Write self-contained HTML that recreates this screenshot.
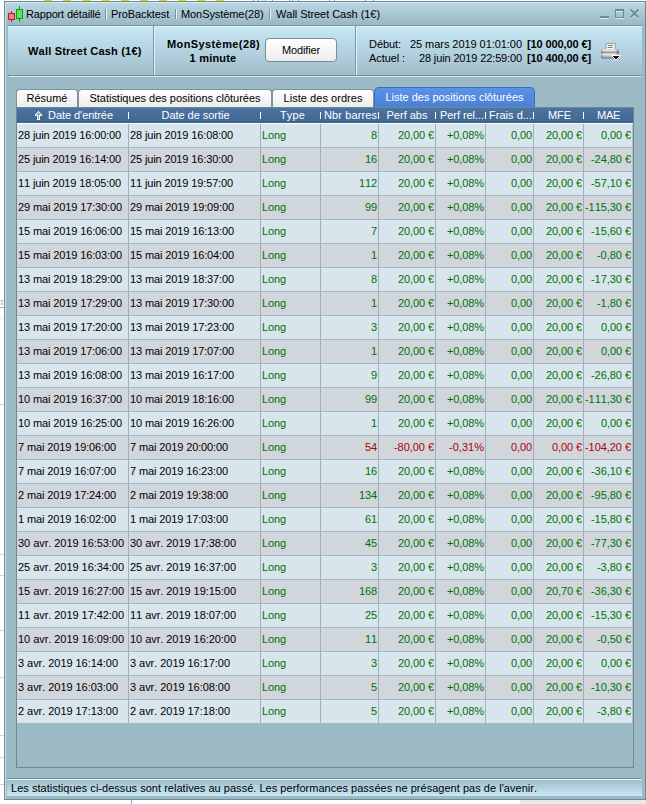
<!DOCTYPE html>
<html><head><meta charset="utf-8"><style>
*{margin:0;padding:0;box-sizing:border-box}
html,body{width:646px;height:804px;overflow:hidden;background:#fff}
body{position:relative;font-family:"Liberation Sans",sans-serif;font-size:11px;color:#000}
.a{position:absolute}
.t{position:absolute;white-space:pre;line-height:13px;font-size:11px;font-kerning:none}
.b{font-weight:bold}
.r{text-align:right}
.c{text-align:center}
.g{color:#007000}
.rd{color:#b00000}
</style></head><body>

<div class="a" style="left:520px;top:800px;width:126px;height:4px;background:#e8e8e8"></div>
<div class="a" style="left:131px;top:800px;width:1px;height:4px;background:#a8a8b0"></div>
<div class="a" style="left:44px;top:0;width:8px;height:1px;background:#f2d200"></div>
<div class="a" style="left:63px;top:0;width:8px;height:1px;background:#f2d200"></div>
<div class="a" style="left:83px;top:0;width:8px;height:1px;background:#f2d200"></div>
<div class="a" style="left:102px;top:0;width:8px;height:1px;background:#f2d200"></div>
<div class="a" style="left:121px;top:0;width:8px;height:1px;background:#f2d200"></div>
<div class="a" style="left:140px;top:0;width:8px;height:1px;background:#f2d200"></div>
<div class="a" style="left:159px;top:0;width:8px;height:1px;background:#f2d200"></div>
<div class="a" style="left:178px;top:0;width:8px;height:1px;background:#f2d200"></div>
<div class="a" style="left:197px;top:0;width:8px;height:1px;background:#f2d200"></div>
<div class="a" style="left:216px;top:0;width:8px;height:1px;background:#f2d200"></div>
<div class="a" style="left:253px;top:0;width:1px;height:1px;background:#8aa6d0"></div>
<div class="a" style="left:258px;top:0;width:1px;height:1px;background:#8aa6d0"></div>
<div class="a" style="left:262px;top:0;width:1px;height:1px;background:#8aa6d0"></div>
<div class="a" style="left:265px;top:0;width:1px;height:1px;background:#8aa6d0"></div>
<div class="a" style="left:272px;top:0;width:1px;height:1px;background:#8aa6d0"></div>
<div class="a" style="left:289px;top:0;width:1px;height:1px;background:#8aa6d0"></div>
<div class="a" style="left:292px;top:0;width:1px;height:1px;background:#8aa6d0"></div>
<div class="a" style="left:298px;top:0;width:1px;height:1px;background:#8aa6d0"></div>
<div class="a" style="left:334px;top:0;width:1px;height:1px;background:#8aa6d0"></div>
<div class="a" style="left:329px;top:0;width:1px;height:1px;background:#8aa6d0"></div>
<div class="a" style="left:365px;top:0;width:1px;height:1px;background:#8aa6d0"></div>
<div class="a" style="left:373px;top:0;width:1px;height:1px;background:#8aa6d0"></div>
<div class="a" style="left:0;top:307px;width:4px;height:1px;background:#b4b4b4"></div>
<div class="a" style="left:0;top:318px;width:4px;height:1px;background:#ececec"></div>
<div class="a" style="left:0;top:404px;width:4px;height:1px;background:#d4d4d4"></div>
<div class="a" style="left:0;top:554px;width:4px;height:1px;background:#d4d4d4"></div>
<div class="a" style="left:0;top:575px;width:4px;height:1px;background:#d4d4d4"></div>
<div class="a" style="left:0;top:630px;width:4px;height:1px;background:#d4d4d4"></div>
<div class="a" style="left:0;top:677px;width:4px;height:1px;background:#d4d4d4"></div>
<div class="a" style="left:0;top:735px;width:4px;height:1px;background:#d4d4d4"></div>
<div class="a" style="left:0;top:757px;width:4px;height:1px;background:#d4d4d4"></div>
<div class="a" style="left:0;top:784px;width:4px;height:1px;background:#d4d4d4"></div>
<div class="a" style="left:1px;top:300px;width:2px;height:2px;background:#c0c0c0"></div>
<div class="a" style="left:1px;top:303px;width:2px;height:2px;background:#c0c0c0"></div>
<div class="a" style="left:4px;top:1px;width:642px;height:799px;background:#9cb9c6;border:1px solid #6f8793"></div>
<div class="a" style="left:5px;top:2px;width:1px;height:797px;background:#c9e3ee"></div>
<div class="a" style="left:6px;top:2px;width:639px;height:23px;background:linear-gradient(#bad7e3,#9ab7c4)"></div>
<div class="a" style="left:5px;top:2px;width:640px;height:1px;background:#d2eef9"></div>
<div class="a" style="left:8px;top:25px;width:634px;height:1px;background:#7f97a2"></div>
<svg class="a" style="left:0;top:0" width="30" height="26" viewBox="0 0 30 26">
<rect x="11" y="11" width="1" height="11" fill="#b02020"/>
<rect x="8.5" y="13.5" width="6" height="6" fill="#f08080" stroke="#b82020" stroke-width="1"/>
<rect x="19" y="6" width="1" height="16" fill="#10a010"/>
<rect x="16.5" y="9.5" width="6" height="9" fill="#60e060" stroke="#10a010" stroke-width="1"/>
</svg>
<div class="t " style="left:26px;top:8px;letter-spacing:-0.16px">Rapport détaillé</div>
<div class="t " style="left:111px;top:8px;letter-spacing:-0.1px">ProBacktest</div>
<div class="t " style="left:181px;top:8px;letter-spacing:-0.08px">MonSystème(28)</div>
<div class="t " style="left:276px;top:8px;letter-spacing:-0.055px;">Wall Street Cash (1€)</div>
<div class="a" style="left:105px;top:9px;width:1px;height:10px;background:#7d929c"></div>
<div class="a" style="left:106px;top:9px;width:1px;height:10px;background:#e2f2f8"></div>
<div class="a" style="left:175px;top:9px;width:1px;height:10px;background:#7d929c"></div>
<div class="a" style="left:176px;top:9px;width:1px;height:10px;background:#e2f2f8"></div>
<div class="a" style="left:269px;top:9px;width:1px;height:10px;background:#7d929c"></div>
<div class="a" style="left:270px;top:9px;width:1px;height:10px;background:#e2f2f8"></div>
<svg class="a" style="left:596px;top:6px" width="48" height="16" viewBox="0 0 48 16" shape-rendering="crispEdges">
<rect x="4" y="10" width="9" height="2" fill="#6f8a96"/>
<rect x="4" y="12" width="9" height="1" fill="#d4eaf3"/>
<rect x="19" y="3" width="9" height="2" fill="#6f8a96"/>
<rect x="19" y="5" width="1" height="7" fill="#6f8a96"/>
<rect x="27" y="5" width="1" height="7" fill="#6f8a96"/>
<rect x="19" y="11" width="9" height="1" fill="#6f8a96"/>
<rect x="20" y="5" width="7" height="1" fill="#d4eaf3"/>
<rect x="19" y="12" width="9" height="1" fill="#d4eaf3"/>
</svg>
<svg class="a" style="left:596px;top:6px" width="48" height="16" viewBox="0 0 48 16">
<path d="M34.5 3.5 L42.5 11.5 M42.5 3.5 L34.5 11.5" stroke="#d4eaf3" stroke-width="1.8" transform="translate(0,1)"/>
<path d="M34.5 3.5 L42.5 11.5 M42.5 3.5 L34.5 11.5" stroke="#6f8a96" stroke-width="1.8"/>
</svg>
<div class="a" style="left:8px;top:26px;width:634px;height:49px;background:linear-gradient(#c8e8f6,#a0bdca)"></div>
<div class="a" style="left:8px;top:26px;width:634px;height:1px;background:#d6f0fa"></div>
<div class="a" style="left:8px;top:75px;width:633px;height:1px;background:#728b96"></div>
<div class="a" style="left:9px;top:76px;width:632px;height:1px;background:#d6ecf5"></div>
<div class="a" style="left:153px;top:26px;width:1px;height:49px;background:#7f97a2"></div>
<div class="a" style="left:154px;top:26px;width:1px;height:49px;background:#e0f3fa"></div>
<div class="a" style="left:355px;top:26px;width:1px;height:49px;background:#7f97a2"></div>
<div class="a" style="left:356px;top:26px;width:1px;height:49px;background:#e0f3fa"></div>
<div class="t b" style="left:28px;top:45px;letter-spacing:0.2px">Wall Street Cash (1€)</div>
<div class="t b c" style="left:154px;top:38px;width:119px;letter-spacing:0.4px">MonSystème(28)</div>
<div class="t b c" style="left:154px;top:52px;width:118px;letter-spacing:0.2px">1 minute</div>
<div class="a" style="left:265px;top:38px;width:72px;height:24px;border:1px solid #7d8c94;border-radius:4px;background:linear-gradient(#ffffff,#ededed)"></div>
<div class="t c" style="left:265px;top:44px;letter-spacing:-0.140px;width:72px">Modifier</div>
<div class="t " style="left:369px;top:38px;letter-spacing:-0.068px;">Début:</div>
<div class="t " style="left:369px;top:52px;letter-spacing:-0.086px;">Actuel :</div>
<div class="t r" style="left:400px;top:38px;letter-spacing:-0.054px;width:122px">25 mars 2019 01:01:00</div>
<div class="t r" style="left:400px;top:52px;letter-spacing:-0.134px;width:122px">28 juin 2019 22:59:00</div>
<div class="t b" style="left:527px;top:38px;letter-spacing:-0.1px">[10 000,00 €]</div>
<div class="t b" style="left:527px;top:52px;letter-spacing:-0.1px">[10 400,00 €]</div>
<svg class="a" style="left:598px;top:40px" width="26" height="22" viewBox="0 0 26 22">
<defs><linearGradient id="pg" x1="0" y1="0" x2="0" y2="1"><stop offset="0" stop-color="#c8c8c8"/><stop offset="0.12" stop-color="#f2f2f2"/><stop offset="0.4" stop-color="#8c8c8c"/><stop offset="0.52" stop-color="#f6f6f6"/><stop offset="0.8" stop-color="#b4b4b4"/><stop offset="1" stop-color="#6e6e6e"/></linearGradient>
<linearGradient id="ph" x1="0" y1="0" x2="1" y2="0"><stop offset="0" stop-color="#000" stop-opacity="0.25"/><stop offset="0.15" stop-color="#000" stop-opacity="0"/><stop offset="0.8" stop-color="#000" stop-opacity="0"/><stop offset="1" stop-color="#000" stop-opacity="0.35"/></linearGradient></defs>
<path d="M8.5 3.5 L17.5 3.5 L16.8 9.5 L7.5 9.5 Z" fill="#fafafa" stroke="#9a9a9a" stroke-width="1"/>
<rect x="10" y="5" width="5" height="1" fill="#777"/><rect x="9.6" y="7" width="5" height="1" fill="#777"/>
<path d="M4.5 9 L20 9 L21 10 L21 18.5 L4 18.5 L3 17.5 L3 10.5 Z" fill="url(#pg)"/>
<path d="M4.5 9 L20 9 L21 10 L21 18.5 L4 18.5 L3 17.5 L3 10.5 Z" fill="url(#ph)"/>
<path d="M13.5 15.5 L22.5 15.5 L18 20 Z" fill="#111" stroke="#fff" stroke-width="1" stroke-linejoin="round"/>
</svg>
<div class="a" style="left:16px;top:89px;width:62px;height:19px;border:1px solid #7d929c;border-bottom:none;border-radius:4px 4px 0 0;background:linear-gradient(#ffffff,#ececec)"></div>
<div class="t c" style="left:16px;top:92px;letter-spacing:0.007px;width:62px">Résumé</div>
<div class="a" style="left:78px;top:89px;width:194px;height:19px;border:1px solid #7d929c;border-bottom:none;border-radius:4px 4px 0 0;background:linear-gradient(#ffffff,#ececec)"></div>
<div class="t c" style="left:78px;top:92px;letter-spacing:-0.023px;width:194px">Statistiques des positions clôturées</div>
<div class="a" style="left:272px;top:89px;width:102px;height:19px;border:1px solid #7d929c;border-bottom:none;border-radius:4px 4px 0 0;background:linear-gradient(#ffffff,#ececec)"></div>
<div class="t c" style="left:272px;top:92px;letter-spacing:0.046px;width:102px">Liste des ordres</div>
<div class="a" style="left:374px;top:87px;width:161px;height:21px;border:1px solid #3a6cc0;border-bottom:none;border-radius:5px 5px 0 0;background:linear-gradient(#5b93e6,#4a7fd6)"></div>
<div class="t c" style="left:374px;top:91px;letter-spacing:-0.006px;width:161px;color:#fff">Liste des positions clôturées</div>
<div class="a" style="left:16px;top:107px;width:618px;height:661px;border:1px solid #6f8793"></div>
<div class="a" style="left:17px;top:108px;width:616px;height:15px;background:linear-gradient(#4c74a0,#3f6690)"></div>
<div class="a" style="left:17px;top:123px;width:616px;height:1px;background:#fff"></div>
<div class="a" style="left:128px;top:112px;width:1px;height:7px;background:#fff"></div>
<div class="a" style="left:260px;top:112px;width:1px;height:7px;background:#fff"></div>
<div class="a" style="left:320px;top:112px;width:1px;height:7px;background:#fff"></div>
<div class="a" style="left:378px;top:112px;width:1px;height:7px;background:#fff"></div>
<div class="a" style="left:435px;top:112px;width:1px;height:7px;background:#fff"></div>
<div class="a" style="left:485px;top:112px;width:1px;height:7px;background:#fff"></div>
<div class="a" style="left:533px;top:112px;width:1px;height:7px;background:#fff"></div>
<div class="a" style="left:583px;top:112px;width:1px;height:7px;background:#fff"></div>
<svg class="a" style="left:34px;top:110px" width="10" height="12" viewBox="0 0 10 12" shape-rendering="crispEdges"><rect x="4" y="1" width="1" height="1" fill="#ffffff"/><rect x="3" y="2" width="1" height="1" fill="#ffffff"/><rect x="4" y="2" width="1" height="1" fill="#8fa9c6"/><rect x="5" y="2" width="1" height="1" fill="#ffffff"/><rect x="2" y="3" width="1" height="1" fill="#ffffff"/><rect x="3" y="3" width="1" height="1" fill="#8fa9c6"/><rect x="4" y="3" width="1" height="1" fill="#8fa9c6"/><rect x="5" y="3" width="1" height="1" fill="#8fa9c6"/><rect x="6" y="3" width="1" height="1" fill="#ffffff"/><rect x="1" y="4" width="1" height="1" fill="#ffffff"/><rect x="2" y="4" width="1" height="1" fill="#8fa9c6"/><rect x="3" y="4" width="1" height="1" fill="#8fa9c6"/><rect x="4" y="4" width="1" height="1" fill="#8fa9c6"/><rect x="5" y="4" width="1" height="1" fill="#8fa9c6"/><rect x="6" y="4" width="1" height="1" fill="#8fa9c6"/><rect x="7" y="4" width="1" height="1" fill="#ffffff"/><rect x="1" y="5" width="1" height="1" fill="#ffffff"/><rect x="2" y="5" width="1" height="1" fill="#ffffff"/><rect x="3" y="5" width="1" height="1" fill="#ffffff"/><rect x="5" y="5" width="1" height="1" fill="#ffffff"/><rect x="6" y="5" width="1" height="1" fill="#ffffff"/><rect x="7" y="5" width="1" height="1" fill="#ffffff"/><rect x="4" y="5" width="1" height="1" fill="#8fa9c6"/><rect x="3" y="6" width="1" height="1" fill="#ffffff"/><rect x="4" y="6" width="1" height="1" fill="#8fa9c6"/><rect x="5" y="6" width="1" height="1" fill="#ffffff"/><rect x="3" y="7" width="1" height="1" fill="#ffffff"/><rect x="4" y="7" width="1" height="1" fill="#8fa9c6"/><rect x="5" y="7" width="1" height="1" fill="#ffffff"/><rect x="3" y="8" width="1" height="1" fill="#ffffff"/><rect x="4" y="8" width="1" height="1" fill="#8fa9c6"/><rect x="5" y="8" width="1" height="1" fill="#ffffff"/><rect x="3" y="9" width="1" height="1" fill="#ffffff"/><rect x="4" y="9" width="1" height="1" fill="#ffffff"/><rect x="5" y="9" width="1" height="1" fill="#ffffff"/></svg>
<div class="t " style="left:48px;top:109px;letter-spacing:-0.054px;color:#fff">Date d'entrée</div>
<div class="t c" style="left:130px;top:109px;letter-spacing:-0.034px;width:131px;color:#fff">Date de sortie</div>
<div class="t c" style="left:263px;top:109px;letter-spacing:0.136px;width:59px;color:#fff">Type</div>
<div class="t " style="left:324px;top:109px;letter-spacing:0.104px;color:#fff">Nbr barres</div>
<div class="t c" style="left:379px;top:109px;width:56px;color:#fff">Perf abs</div>
<div class="t " style="left:440px;top:109px;letter-spacing:-0.057px;color:#fff">Perf rel...</div>
<div class="t " style="left:489px;top:109px;letter-spacing:0.021px;color:#fff">Frais d...</div>
<div class="t c" style="left:535px;top:109px;letter-spacing:-0.073px;width:49px;color:#fff">MFE</div>
<div class="t c" style="left:584px;top:109px;letter-spacing:-0.279px;width:49px;color:#fff">MAE</div>
<div class="a" style="left:17px;top:124px;width:616px;height:23px;background:#d8e5ec"></div>
<div class="a" style="left:17px;top:147px;width:616px;height:1px;background:#aab7be"></div>
<div class="t " style="left:18px;top:129px;letter-spacing:-0.134px;">28 juin 2019 16:00:00</div>
<div class="t " style="left:130px;top:129px;letter-spacing:-0.134px;">28 juin 2019 16:08:00</div>
<div class="t g" style="left:262px;top:129px;letter-spacing:-0.118px;">Long</div>
<div class="t r g" style="left:178px;top:129px;letter-spacing:-0.118px;width:199px">8</div>
<div class="t r g" style="left:235px;top:129px;letter-spacing:-0.100px;width:199px">20,00 €</div>
<div class="t r g" style="left:285px;top:129px;letter-spacing:-0.102px;width:199px">+0,08%</div>
<div class="t r g" style="left:333px;top:129px;letter-spacing:-0.102px;width:199px">0,00</div>
<div class="t r g" style="left:383px;top:129px;letter-spacing:-0.100px;width:199px">20,00 €</div>
<div class="t r g" style="left:432px;top:129px;letter-spacing:-0.097px;width:199px">0,00 €</div>
<div class="a" style="left:17px;top:148px;width:616px;height:23px;background:#d1d6dc"></div>
<div class="a" style="left:17px;top:171px;width:616px;height:1px;background:#aab7be"></div>
<div class="t " style="left:18px;top:153px;letter-spacing:-0.134px;">25 juin 2019 16:14:00</div>
<div class="t " style="left:130px;top:153px;letter-spacing:-0.134px;">25 juin 2019 16:30:00</div>
<div class="t g" style="left:262px;top:153px;letter-spacing:-0.118px;">Long</div>
<div class="t r g" style="left:178px;top:153px;letter-spacing:-0.118px;width:199px">16</div>
<div class="t r g" style="left:235px;top:153px;letter-spacing:-0.100px;width:199px">20,00 €</div>
<div class="t r g" style="left:285px;top:153px;letter-spacing:-0.102px;width:199px">+0,08%</div>
<div class="t r g" style="left:333px;top:153px;letter-spacing:-0.102px;width:199px">0,00</div>
<div class="t r g" style="left:383px;top:153px;letter-spacing:-0.100px;width:199px">20,00 €</div>
<div class="t r g" style="left:432px;top:153px;letter-spacing:-0.045px;width:199px">-24,80 €</div>
<div class="a" style="left:17px;top:172px;width:616px;height:23px;background:#d8e5ec"></div>
<div class="a" style="left:17px;top:195px;width:616px;height:1px;background:#aab7be"></div>
<div class="t " style="left:18px;top:177px;letter-spacing:-0.134px;">11 juin 2019 18:05:00</div>
<div class="t " style="left:130px;top:177px;letter-spacing:-0.134px;">11 juin 2019 19:57:00</div>
<div class="t g" style="left:262px;top:177px;letter-spacing:-0.118px;">Long</div>
<div class="t r g" style="left:178px;top:177px;letter-spacing:-0.118px;width:199px">112</div>
<div class="t r g" style="left:235px;top:177px;letter-spacing:-0.100px;width:199px">20,00 €</div>
<div class="t r g" style="left:285px;top:177px;letter-spacing:-0.102px;width:199px">+0,08%</div>
<div class="t r g" style="left:333px;top:177px;letter-spacing:-0.102px;width:199px">0,00</div>
<div class="t r g" style="left:383px;top:177px;letter-spacing:-0.100px;width:199px">20,00 €</div>
<div class="t r g" style="left:432px;top:177px;letter-spacing:-0.045px;width:199px">-57,10 €</div>
<div class="a" style="left:17px;top:196px;width:616px;height:23px;background:#d1d6dc"></div>
<div class="a" style="left:17px;top:219px;width:616px;height:1px;background:#aab7be"></div>
<div class="t " style="left:18px;top:201px;letter-spacing:-0.121px;">29 mai 2019 17:30:00</div>
<div class="t " style="left:130px;top:201px;letter-spacing:-0.121px;">29 mai 2019 19:09:00</div>
<div class="t g" style="left:262px;top:201px;letter-spacing:-0.118px;">Long</div>
<div class="t r g" style="left:178px;top:201px;letter-spacing:-0.118px;width:199px">99</div>
<div class="t r g" style="left:235px;top:201px;letter-spacing:-0.100px;width:199px">20,00 €</div>
<div class="t r g" style="left:285px;top:201px;letter-spacing:-0.102px;width:199px">+0,08%</div>
<div class="t r g" style="left:333px;top:201px;letter-spacing:-0.102px;width:199px">0,00</div>
<div class="t r g" style="left:383px;top:201px;letter-spacing:-0.100px;width:199px">20,00 €</div>
<div class="t r g" style="left:432px;top:201px;letter-spacing:-0.053px;width:199px">-115,30 €</div>
<div class="a" style="left:17px;top:220px;width:616px;height:23px;background:#d8e5ec"></div>
<div class="a" style="left:17px;top:243px;width:616px;height:1px;background:#aab7be"></div>
<div class="t " style="left:18px;top:225px;letter-spacing:-0.121px;">15 mai 2019 16:06:00</div>
<div class="t " style="left:130px;top:225px;letter-spacing:-0.121px;">15 mai 2019 16:13:00</div>
<div class="t g" style="left:262px;top:225px;letter-spacing:-0.118px;">Long</div>
<div class="t r g" style="left:178px;top:225px;letter-spacing:-0.118px;width:199px">7</div>
<div class="t r g" style="left:235px;top:225px;letter-spacing:-0.100px;width:199px">20,00 €</div>
<div class="t r g" style="left:285px;top:225px;letter-spacing:-0.102px;width:199px">+0,08%</div>
<div class="t r g" style="left:333px;top:225px;letter-spacing:-0.102px;width:199px">0,00</div>
<div class="t r g" style="left:383px;top:225px;letter-spacing:-0.100px;width:199px">20,00 €</div>
<div class="t r g" style="left:432px;top:225px;letter-spacing:-0.045px;width:199px">-15,60 €</div>
<div class="a" style="left:17px;top:244px;width:616px;height:23px;background:#d1d6dc"></div>
<div class="a" style="left:17px;top:267px;width:616px;height:1px;background:#aab7be"></div>
<div class="t " style="left:18px;top:249px;letter-spacing:-0.121px;">15 mai 2019 16:03:00</div>
<div class="t " style="left:130px;top:249px;letter-spacing:-0.121px;">15 mai 2019 16:04:00</div>
<div class="t g" style="left:262px;top:249px;letter-spacing:-0.118px;">Long</div>
<div class="t r g" style="left:178px;top:249px;letter-spacing:-0.118px;width:199px">1</div>
<div class="t r g" style="left:235px;top:249px;letter-spacing:-0.100px;width:199px">20,00 €</div>
<div class="t r g" style="left:285px;top:249px;letter-spacing:-0.102px;width:199px">+0,08%</div>
<div class="t r g" style="left:333px;top:249px;letter-spacing:-0.102px;width:199px">0,00</div>
<div class="t r g" style="left:383px;top:249px;letter-spacing:-0.100px;width:199px">20,00 €</div>
<div class="t r g" style="left:432px;top:249px;letter-spacing:-0.035px;width:199px">-0,80 €</div>
<div class="a" style="left:17px;top:268px;width:616px;height:23px;background:#d8e5ec"></div>
<div class="a" style="left:17px;top:291px;width:616px;height:1px;background:#aab7be"></div>
<div class="t " style="left:18px;top:273px;letter-spacing:-0.121px;">13 mai 2019 18:29:00</div>
<div class="t " style="left:130px;top:273px;letter-spacing:-0.121px;">13 mai 2019 18:37:00</div>
<div class="t g" style="left:262px;top:273px;letter-spacing:-0.118px;">Long</div>
<div class="t r g" style="left:178px;top:273px;letter-spacing:-0.118px;width:199px">8</div>
<div class="t r g" style="left:235px;top:273px;letter-spacing:-0.100px;width:199px">20,00 €</div>
<div class="t r g" style="left:285px;top:273px;letter-spacing:-0.102px;width:199px">+0,08%</div>
<div class="t r g" style="left:333px;top:273px;letter-spacing:-0.102px;width:199px">0,00</div>
<div class="t r g" style="left:383px;top:273px;letter-spacing:-0.100px;width:199px">20,00 €</div>
<div class="t r g" style="left:432px;top:273px;letter-spacing:-0.045px;width:199px">-17,30 €</div>
<div class="a" style="left:17px;top:292px;width:616px;height:23px;background:#d1d6dc"></div>
<div class="a" style="left:17px;top:315px;width:616px;height:1px;background:#aab7be"></div>
<div class="t " style="left:18px;top:297px;letter-spacing:-0.121px;">13 mai 2019 17:29:00</div>
<div class="t " style="left:130px;top:297px;letter-spacing:-0.121px;">13 mai 2019 17:30:00</div>
<div class="t g" style="left:262px;top:297px;letter-spacing:-0.118px;">Long</div>
<div class="t r g" style="left:178px;top:297px;letter-spacing:-0.118px;width:199px">1</div>
<div class="t r g" style="left:235px;top:297px;letter-spacing:-0.100px;width:199px">20,00 €</div>
<div class="t r g" style="left:285px;top:297px;letter-spacing:-0.102px;width:199px">+0,08%</div>
<div class="t r g" style="left:333px;top:297px;letter-spacing:-0.102px;width:199px">0,00</div>
<div class="t r g" style="left:383px;top:297px;letter-spacing:-0.100px;width:199px">20,00 €</div>
<div class="t r g" style="left:432px;top:297px;letter-spacing:-0.035px;width:199px">-1,80 €</div>
<div class="a" style="left:17px;top:316px;width:616px;height:23px;background:#d8e5ec"></div>
<div class="a" style="left:17px;top:339px;width:616px;height:1px;background:#aab7be"></div>
<div class="t " style="left:18px;top:321px;letter-spacing:-0.121px;">13 mai 2019 17:20:00</div>
<div class="t " style="left:130px;top:321px;letter-spacing:-0.121px;">13 mai 2019 17:23:00</div>
<div class="t g" style="left:262px;top:321px;letter-spacing:-0.118px;">Long</div>
<div class="t r g" style="left:178px;top:321px;letter-spacing:-0.118px;width:199px">3</div>
<div class="t r g" style="left:235px;top:321px;letter-spacing:-0.100px;width:199px">20,00 €</div>
<div class="t r g" style="left:285px;top:321px;letter-spacing:-0.102px;width:199px">+0,08%</div>
<div class="t r g" style="left:333px;top:321px;letter-spacing:-0.102px;width:199px">0,00</div>
<div class="t r g" style="left:383px;top:321px;letter-spacing:-0.100px;width:199px">20,00 €</div>
<div class="t r g" style="left:432px;top:321px;letter-spacing:-0.097px;width:199px">0,00 €</div>
<div class="a" style="left:17px;top:340px;width:616px;height:23px;background:#d1d6dc"></div>
<div class="a" style="left:17px;top:363px;width:616px;height:1px;background:#aab7be"></div>
<div class="t " style="left:18px;top:345px;letter-spacing:-0.121px;">13 mai 2019 17:06:00</div>
<div class="t " style="left:130px;top:345px;letter-spacing:-0.121px;">13 mai 2019 17:07:00</div>
<div class="t g" style="left:262px;top:345px;letter-spacing:-0.118px;">Long</div>
<div class="t r g" style="left:178px;top:345px;letter-spacing:-0.118px;width:199px">1</div>
<div class="t r g" style="left:235px;top:345px;letter-spacing:-0.100px;width:199px">20,00 €</div>
<div class="t r g" style="left:285px;top:345px;letter-spacing:-0.102px;width:199px">+0,08%</div>
<div class="t r g" style="left:333px;top:345px;letter-spacing:-0.102px;width:199px">0,00</div>
<div class="t r g" style="left:383px;top:345px;letter-spacing:-0.100px;width:199px">20,00 €</div>
<div class="t r g" style="left:432px;top:345px;letter-spacing:-0.097px;width:199px">0,00 €</div>
<div class="a" style="left:17px;top:364px;width:616px;height:23px;background:#d8e5ec"></div>
<div class="a" style="left:17px;top:387px;width:616px;height:1px;background:#aab7be"></div>
<div class="t " style="left:18px;top:369px;letter-spacing:-0.121px;">13 mai 2019 16:08:00</div>
<div class="t " style="left:130px;top:369px;letter-spacing:-0.121px;">13 mai 2019 16:17:00</div>
<div class="t g" style="left:262px;top:369px;letter-spacing:-0.118px;">Long</div>
<div class="t r g" style="left:178px;top:369px;letter-spacing:-0.118px;width:199px">9</div>
<div class="t r g" style="left:235px;top:369px;letter-spacing:-0.100px;width:199px">20,00 €</div>
<div class="t r g" style="left:285px;top:369px;letter-spacing:-0.102px;width:199px">+0,08%</div>
<div class="t r g" style="left:333px;top:369px;letter-spacing:-0.102px;width:199px">0,00</div>
<div class="t r g" style="left:383px;top:369px;letter-spacing:-0.100px;width:199px">20,00 €</div>
<div class="t r g" style="left:432px;top:369px;letter-spacing:-0.045px;width:199px">-26,80 €</div>
<div class="a" style="left:17px;top:388px;width:616px;height:23px;background:#d1d6dc"></div>
<div class="a" style="left:17px;top:411px;width:616px;height:1px;background:#aab7be"></div>
<div class="t " style="left:18px;top:393px;letter-spacing:-0.121px;">10 mai 2019 16:37:00</div>
<div class="t " style="left:130px;top:393px;letter-spacing:-0.121px;">10 mai 2019 18:16:00</div>
<div class="t g" style="left:262px;top:393px;letter-spacing:-0.118px;">Long</div>
<div class="t r g" style="left:178px;top:393px;letter-spacing:-0.118px;width:199px">99</div>
<div class="t r g" style="left:235px;top:393px;letter-spacing:-0.100px;width:199px">20,00 €</div>
<div class="t r g" style="left:285px;top:393px;letter-spacing:-0.102px;width:199px">+0,08%</div>
<div class="t r g" style="left:333px;top:393px;letter-spacing:-0.102px;width:199px">0,00</div>
<div class="t r g" style="left:383px;top:393px;letter-spacing:-0.100px;width:199px">20,00 €</div>
<div class="t r g" style="left:432px;top:393px;letter-spacing:-0.053px;width:199px">-111,30 €</div>
<div class="a" style="left:17px;top:412px;width:616px;height:23px;background:#d8e5ec"></div>
<div class="a" style="left:17px;top:435px;width:616px;height:1px;background:#aab7be"></div>
<div class="t " style="left:18px;top:417px;letter-spacing:-0.121px;">10 mai 2019 16:25:00</div>
<div class="t " style="left:130px;top:417px;letter-spacing:-0.121px;">10 mai 2019 16:26:00</div>
<div class="t g" style="left:262px;top:417px;letter-spacing:-0.118px;">Long</div>
<div class="t r g" style="left:178px;top:417px;letter-spacing:-0.118px;width:199px">1</div>
<div class="t r g" style="left:235px;top:417px;letter-spacing:-0.100px;width:199px">20,00 €</div>
<div class="t r g" style="left:285px;top:417px;letter-spacing:-0.102px;width:199px">+0,08%</div>
<div class="t r g" style="left:333px;top:417px;letter-spacing:-0.102px;width:199px">0,00</div>
<div class="t r g" style="left:383px;top:417px;letter-spacing:-0.100px;width:199px">20,00 €</div>
<div class="t r g" style="left:432px;top:417px;letter-spacing:-0.097px;width:199px">0,00 €</div>
<div class="a" style="left:17px;top:436px;width:616px;height:23px;background:#d1d6dc"></div>
<div class="a" style="left:17px;top:459px;width:616px;height:1px;background:#aab7be"></div>
<div class="t " style="left:18px;top:441px;letter-spacing:-0.121px;">7 mai 2019 19:06:00</div>
<div class="t " style="left:130px;top:441px;letter-spacing:-0.121px;">7 mai 2019 20:00:00</div>
<div class="t g" style="left:262px;top:441px;letter-spacing:-0.118px;">Long</div>
<div class="t r rd" style="left:178px;top:441px;letter-spacing:-0.118px;width:199px">54</div>
<div class="t r rd" style="left:235px;top:441px;letter-spacing:-0.045px;width:199px">-80,00 €</div>
<div class="t r rd" style="left:285px;top:441px;letter-spacing:0.024px;width:199px">-0,31%</div>
<div class="t r rd" style="left:333px;top:441px;letter-spacing:-0.102px;width:199px">0,00</div>
<div class="t r rd" style="left:383px;top:441px;letter-spacing:-0.097px;width:199px">0,00 €</div>
<div class="t r rd" style="left:432px;top:441px;letter-spacing:-0.053px;width:199px">-104,20 €</div>
<div class="a" style="left:17px;top:460px;width:616px;height:23px;background:#d8e5ec"></div>
<div class="a" style="left:17px;top:483px;width:616px;height:1px;background:#aab7be"></div>
<div class="t " style="left:18px;top:465px;letter-spacing:-0.121px;">7 mai 2019 16:07:00</div>
<div class="t " style="left:130px;top:465px;letter-spacing:-0.121px;">7 mai 2019 16:23:00</div>
<div class="t g" style="left:262px;top:465px;letter-spacing:-0.118px;">Long</div>
<div class="t r g" style="left:178px;top:465px;letter-spacing:-0.118px;width:199px">16</div>
<div class="t r g" style="left:235px;top:465px;letter-spacing:-0.100px;width:199px">20,00 €</div>
<div class="t r g" style="left:285px;top:465px;letter-spacing:-0.102px;width:199px">+0,08%</div>
<div class="t r g" style="left:333px;top:465px;letter-spacing:-0.102px;width:199px">0,00</div>
<div class="t r g" style="left:383px;top:465px;letter-spacing:-0.100px;width:199px">20,00 €</div>
<div class="t r g" style="left:432px;top:465px;letter-spacing:-0.045px;width:199px">-36,10 €</div>
<div class="a" style="left:17px;top:484px;width:616px;height:23px;background:#d1d6dc"></div>
<div class="a" style="left:17px;top:507px;width:616px;height:1px;background:#aab7be"></div>
<div class="t " style="left:18px;top:489px;letter-spacing:-0.121px;">2 mai 2019 17:24:00</div>
<div class="t " style="left:130px;top:489px;letter-spacing:-0.121px;">2 mai 2019 19:38:00</div>
<div class="t g" style="left:262px;top:489px;letter-spacing:-0.118px;">Long</div>
<div class="t r g" style="left:178px;top:489px;letter-spacing:-0.118px;width:199px">134</div>
<div class="t r g" style="left:235px;top:489px;letter-spacing:-0.100px;width:199px">20,00 €</div>
<div class="t r g" style="left:285px;top:489px;letter-spacing:-0.102px;width:199px">+0,08%</div>
<div class="t r g" style="left:333px;top:489px;letter-spacing:-0.102px;width:199px">0,00</div>
<div class="t r g" style="left:383px;top:489px;letter-spacing:-0.100px;width:199px">20,00 €</div>
<div class="t r g" style="left:432px;top:489px;letter-spacing:-0.045px;width:199px">-95,80 €</div>
<div class="a" style="left:17px;top:508px;width:616px;height:23px;background:#d8e5ec"></div>
<div class="a" style="left:17px;top:531px;width:616px;height:1px;background:#aab7be"></div>
<div class="t " style="left:18px;top:513px;letter-spacing:-0.121px;">1 mai 2019 16:02:00</div>
<div class="t " style="left:130px;top:513px;letter-spacing:-0.121px;">1 mai 2019 17:03:00</div>
<div class="t g" style="left:262px;top:513px;letter-spacing:-0.118px;">Long</div>
<div class="t r g" style="left:178px;top:513px;letter-spacing:-0.118px;width:199px">61</div>
<div class="t r g" style="left:235px;top:513px;letter-spacing:-0.100px;width:199px">20,00 €</div>
<div class="t r g" style="left:285px;top:513px;letter-spacing:-0.102px;width:199px">+0,08%</div>
<div class="t r g" style="left:333px;top:513px;letter-spacing:-0.102px;width:199px">0,00</div>
<div class="t r g" style="left:383px;top:513px;letter-spacing:-0.100px;width:199px">20,00 €</div>
<div class="t r g" style="left:432px;top:513px;letter-spacing:-0.045px;width:199px">-15,80 €</div>
<div class="a" style="left:17px;top:532px;width:616px;height:23px;background:#d1d6dc"></div>
<div class="a" style="left:17px;top:555px;width:616px;height:1px;background:#aab7be"></div>
<div class="t " style="left:18px;top:537px;letter-spacing:-0.049px;">30 avr. 2019 16:53:00</div>
<div class="t " style="left:130px;top:537px;letter-spacing:-0.049px;">30 avr. 2019 17:38:00</div>
<div class="t g" style="left:262px;top:537px;letter-spacing:-0.118px;">Long</div>
<div class="t r g" style="left:178px;top:537px;letter-spacing:-0.118px;width:199px">45</div>
<div class="t r g" style="left:235px;top:537px;letter-spacing:-0.100px;width:199px">20,00 €</div>
<div class="t r g" style="left:285px;top:537px;letter-spacing:-0.102px;width:199px">+0,08%</div>
<div class="t r g" style="left:333px;top:537px;letter-spacing:-0.102px;width:199px">0,00</div>
<div class="t r g" style="left:383px;top:537px;letter-spacing:-0.100px;width:199px">20,00 €</div>
<div class="t r g" style="left:432px;top:537px;letter-spacing:-0.045px;width:199px">-77,30 €</div>
<div class="a" style="left:17px;top:556px;width:616px;height:23px;background:#d8e5ec"></div>
<div class="a" style="left:17px;top:579px;width:616px;height:1px;background:#aab7be"></div>
<div class="t " style="left:18px;top:561px;letter-spacing:-0.049px;">25 avr. 2019 16:34:00</div>
<div class="t " style="left:130px;top:561px;letter-spacing:-0.049px;">25 avr. 2019 16:37:00</div>
<div class="t g" style="left:262px;top:561px;letter-spacing:-0.118px;">Long</div>
<div class="t r g" style="left:178px;top:561px;letter-spacing:-0.118px;width:199px">3</div>
<div class="t r g" style="left:235px;top:561px;letter-spacing:-0.100px;width:199px">20,00 €</div>
<div class="t r g" style="left:285px;top:561px;letter-spacing:-0.102px;width:199px">+0,08%</div>
<div class="t r g" style="left:333px;top:561px;letter-spacing:-0.102px;width:199px">0,00</div>
<div class="t r g" style="left:383px;top:561px;letter-spacing:-0.100px;width:199px">20,00 €</div>
<div class="t r g" style="left:432px;top:561px;letter-spacing:-0.035px;width:199px">-3,80 €</div>
<div class="a" style="left:17px;top:580px;width:616px;height:23px;background:#d1d6dc"></div>
<div class="a" style="left:17px;top:603px;width:616px;height:1px;background:#aab7be"></div>
<div class="t " style="left:18px;top:585px;letter-spacing:-0.049px;">15 avr. 2019 16:27:00</div>
<div class="t " style="left:130px;top:585px;letter-spacing:-0.049px;">15 avr. 2019 19:15:00</div>
<div class="t g" style="left:262px;top:585px;letter-spacing:-0.118px;">Long</div>
<div class="t r g" style="left:178px;top:585px;letter-spacing:-0.118px;width:199px">168</div>
<div class="t r g" style="left:235px;top:585px;letter-spacing:-0.100px;width:199px">20,00 €</div>
<div class="t r g" style="left:285px;top:585px;letter-spacing:-0.102px;width:199px">+0,08%</div>
<div class="t r g" style="left:333px;top:585px;letter-spacing:-0.102px;width:199px">0,00</div>
<div class="t r g" style="left:383px;top:585px;letter-spacing:-0.100px;width:199px">20,70 €</div>
<div class="t r g" style="left:432px;top:585px;letter-spacing:-0.045px;width:199px">-36,30 €</div>
<div class="a" style="left:17px;top:604px;width:616px;height:23px;background:#d8e5ec"></div>
<div class="a" style="left:17px;top:627px;width:616px;height:1px;background:#aab7be"></div>
<div class="t " style="left:18px;top:609px;letter-spacing:-0.049px;">11 avr. 2019 17:42:00</div>
<div class="t " style="left:130px;top:609px;letter-spacing:-0.049px;">11 avr. 2019 18:07:00</div>
<div class="t g" style="left:262px;top:609px;letter-spacing:-0.118px;">Long</div>
<div class="t r g" style="left:178px;top:609px;letter-spacing:-0.118px;width:199px">25</div>
<div class="t r g" style="left:235px;top:609px;letter-spacing:-0.100px;width:199px">20,00 €</div>
<div class="t r g" style="left:285px;top:609px;letter-spacing:-0.102px;width:199px">+0,08%</div>
<div class="t r g" style="left:333px;top:609px;letter-spacing:-0.102px;width:199px">0,00</div>
<div class="t r g" style="left:383px;top:609px;letter-spacing:-0.100px;width:199px">20,00 €</div>
<div class="t r g" style="left:432px;top:609px;letter-spacing:-0.045px;width:199px">-15,30 €</div>
<div class="a" style="left:17px;top:628px;width:616px;height:23px;background:#d1d6dc"></div>
<div class="a" style="left:17px;top:651px;width:616px;height:1px;background:#aab7be"></div>
<div class="t " style="left:18px;top:633px;letter-spacing:-0.049px;">10 avr. 2019 16:09:00</div>
<div class="t " style="left:130px;top:633px;letter-spacing:-0.049px;">10 avr. 2019 16:20:00</div>
<div class="t g" style="left:262px;top:633px;letter-spacing:-0.118px;">Long</div>
<div class="t r g" style="left:178px;top:633px;letter-spacing:-0.118px;width:199px">11</div>
<div class="t r g" style="left:235px;top:633px;letter-spacing:-0.100px;width:199px">20,00 €</div>
<div class="t r g" style="left:285px;top:633px;letter-spacing:-0.102px;width:199px">+0,08%</div>
<div class="t r g" style="left:333px;top:633px;letter-spacing:-0.102px;width:199px">0,00</div>
<div class="t r g" style="left:383px;top:633px;letter-spacing:-0.100px;width:199px">20,00 €</div>
<div class="t r g" style="left:432px;top:633px;letter-spacing:-0.035px;width:199px">-0,50 €</div>
<div class="a" style="left:17px;top:652px;width:616px;height:23px;background:#d8e5ec"></div>
<div class="a" style="left:17px;top:675px;width:616px;height:1px;background:#aab7be"></div>
<div class="t " style="left:18px;top:657px;letter-spacing:-0.046px;">3 avr. 2019 16:14:00</div>
<div class="t " style="left:130px;top:657px;letter-spacing:-0.046px;">3 avr. 2019 16:17:00</div>
<div class="t g" style="left:262px;top:657px;letter-spacing:-0.118px;">Long</div>
<div class="t r g" style="left:178px;top:657px;letter-spacing:-0.118px;width:199px">3</div>
<div class="t r g" style="left:235px;top:657px;letter-spacing:-0.100px;width:199px">20,00 €</div>
<div class="t r g" style="left:285px;top:657px;letter-spacing:-0.102px;width:199px">+0,08%</div>
<div class="t r g" style="left:333px;top:657px;letter-spacing:-0.102px;width:199px">0,00</div>
<div class="t r g" style="left:383px;top:657px;letter-spacing:-0.100px;width:199px">20,00 €</div>
<div class="t r g" style="left:432px;top:657px;letter-spacing:-0.097px;width:199px">0,00 €</div>
<div class="a" style="left:17px;top:676px;width:616px;height:23px;background:#d1d6dc"></div>
<div class="a" style="left:17px;top:699px;width:616px;height:1px;background:#aab7be"></div>
<div class="t " style="left:18px;top:681px;letter-spacing:-0.046px;">3 avr. 2019 16:03:00</div>
<div class="t " style="left:130px;top:681px;letter-spacing:-0.046px;">3 avr. 2019 16:08:00</div>
<div class="t g" style="left:262px;top:681px;letter-spacing:-0.118px;">Long</div>
<div class="t r g" style="left:178px;top:681px;letter-spacing:-0.118px;width:199px">5</div>
<div class="t r g" style="left:235px;top:681px;letter-spacing:-0.100px;width:199px">20,00 €</div>
<div class="t r g" style="left:285px;top:681px;letter-spacing:-0.102px;width:199px">+0,08%</div>
<div class="t r g" style="left:333px;top:681px;letter-spacing:-0.102px;width:199px">0,00</div>
<div class="t r g" style="left:383px;top:681px;letter-spacing:-0.100px;width:199px">20,00 €</div>
<div class="t r g" style="left:432px;top:681px;letter-spacing:-0.045px;width:199px">-10,30 €</div>
<div class="a" style="left:17px;top:700px;width:616px;height:23px;background:#d8e5ec"></div>
<div class="a" style="left:17px;top:723px;width:616px;height:1px;background:#aab7be"></div>
<div class="t " style="left:18px;top:705px;letter-spacing:-0.046px;">2 avr. 2019 17:13:00</div>
<div class="t " style="left:130px;top:705px;letter-spacing:-0.046px;">2 avr. 2019 17:18:00</div>
<div class="t g" style="left:262px;top:705px;letter-spacing:-0.118px;">Long</div>
<div class="t r g" style="left:178px;top:705px;letter-spacing:-0.118px;width:199px">5</div>
<div class="t r g" style="left:235px;top:705px;letter-spacing:-0.100px;width:199px">20,00 €</div>
<div class="t r g" style="left:285px;top:705px;letter-spacing:-0.102px;width:199px">+0,08%</div>
<div class="t r g" style="left:333px;top:705px;letter-spacing:-0.102px;width:199px">0,00</div>
<div class="t r g" style="left:383px;top:705px;letter-spacing:-0.100px;width:199px">20,00 €</div>
<div class="t r g" style="left:432px;top:705px;letter-spacing:-0.035px;width:199px">-3,80 €</div>
<div class="a" style="left:128px;top:124px;width:1px;height:600px;background:#9fb0b8"></div>
<div class="a" style="left:260px;top:124px;width:1px;height:600px;background:#9fb0b8"></div>
<div class="a" style="left:320px;top:124px;width:1px;height:600px;background:#9fb0b8"></div>
<div class="a" style="left:378px;top:124px;width:1px;height:600px;background:#9fb0b8"></div>
<div class="a" style="left:435px;top:124px;width:1px;height:600px;background:#9fb0b8"></div>
<div class="a" style="left:485px;top:124px;width:1px;height:600px;background:#9fb0b8"></div>
<div class="a" style="left:533px;top:124px;width:1px;height:600px;background:#9fb0b8"></div>
<div class="a" style="left:583px;top:124px;width:1px;height:600px;background:#9fb0b8"></div>
<div class="a" style="left:632px;top:124px;width:1px;height:600px;background:#b2c0c6"></div>
<div class="a" style="left:7px;top:778px;width:635px;height:1px;background:#72909c"></div>
<div class="a" style="left:7px;top:779px;width:635px;height:1px;background:#e4f4fa"></div>
<div class="a" style="left:7px;top:780px;width:635px;height:16px;background:linear-gradient(#a0bdca,#c8e8f6)"></div>
<div class="t " style="left:11px;top:782px;letter-spacing:0.028px;">Les statistiques ci-dessus sont relatives au passé. Les performances passées ne présagent pas de l'avenir.</div>
</body></html>
